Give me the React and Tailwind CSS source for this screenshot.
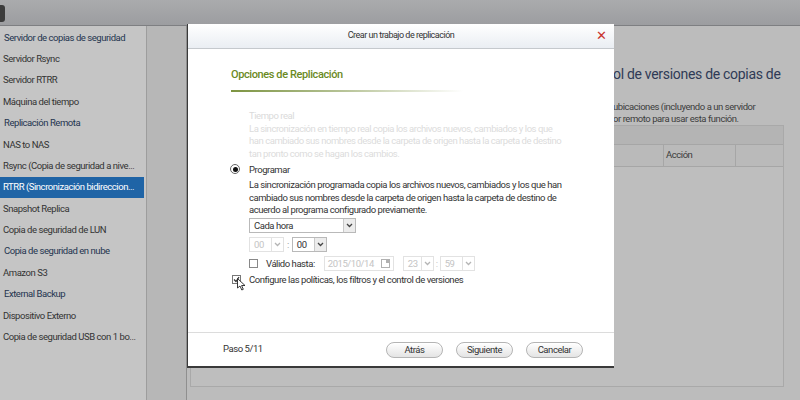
import { useState } from "react";

const menu = [
  { label: "Servidor de copias de seguridad", head: true },
  { label: "Servidor Rsync" },
  { label: "Servidor RTRR" },
  { label: "Máquina del tiempo" },
  { label: "Replicación Remota", head: true },
  { label: "NAS to NAS" },
  { label: "Rsync (Copia de seguridad a nive..." },
  { label: "RTRR (Sincronización bidireccion...", active: true },
  { label: "Snapshot Replica" },
  { label: "Copia de seguridad de LUN" },
  { label: "Copia de seguridad en nube", head: true },
  { label: "Amazon S3" },
  { label: "External Backup", head: true },
  { label: "Dispositivo Externo" },
  { label: "Copia de seguridad USB con 1 bo..." },
];

function Chevron({ faded }) {
  return (
    <svg width="7" height="5" viewBox="0 0 7 5">
      <path d="M1 1 L3.5 3.5 L6 1" fill="none" stroke={faded ? "#b5b5b5" : "#444"} strokeWidth="1.3" />
    </svg>
  );
}

function Select({ value, width, faded }) {
  return (
    <div
      className={`flex h-[15px] items-stretch border ${faded ? "border-[#e2e2e2] text-[#c4c4c4]" : "border-[#b9b9b9] text-[#333]"}`}
      style={{ width }}
    >
      <div className="flex flex-1 items-center pl-[4px]">{value}</div>
      <div className={`flex w-[12px] items-center justify-center border-l ${faded ? "border-[#e2e2e2]" : "border-[#c9c9c9] bg-[#ececec]"}`}>
        <Chevron faded={faded} />
      </div>
    </div>
  );
}

function Button({ children }) {
  return (
    <button className="h-[16px] w-[57px] rounded-full border border-[#b4b4b4] bg-gradient-to-b from-white to-[#e4e4e4] text-[#333] shadow-[0_1px_0_#fff_inset]">
      {children}
    </button>
  );
}

function Modal() {
  const [checked, setChecked] = useState(true);
  return (
    <div className="absolute left-[187px] top-[24px] flex h-[344px] w-[427px] flex-col border-b-2 border-l border-[#3a3a3a] bg-white">
      <div className="relative flex h-[25px] items-center justify-center border-b border-[#c5c9cd] bg-gradient-to-b from-white to-[#eaeef3] text-[9px] tracking-[-0.5px] text-[#333]">
        Crear un trabajo de replicación
        <span className="absolute right-[8px] top-[5px] text-[13px] leading-none text-[#c8332e]">✕</span>
      </div>
      <div className="flex-1 pl-[43px] pr-[20px]">
        <div className="mt-[18px] text-[11px] font-medium tracking-[-0.4px] text-[#6b8a1e]">Opciones de Replicación</div>
        <div className="mt-[6px] h-[2px] w-[232px] bg-gradient-to-r from-[#7d9440] via-[#b9c59a] to-transparent" />
        <div className="whitespace-nowrap pl-[18px] leading-[13px]">
          <div className="mt-[17px] text-[#dadada]">Tiempo real</div>
          <div className="mt-[1px] leading-[12.5px] text-[#dcdcdc]">
            <div>La sincronización en tiempo real copia los archivos nuevos, cambiados y los que</div>
            <div>han cambiado sus nombres desde la carpeta de origen hasta la carpeta de destino</div>
            <div>tan pronto como se hagan los cambios.</div>
          </div>
          <div className="relative mt-[3px] text-[#333]">
            <span className="absolute left-[-19px] top-[1px] flex h-[10px] w-[10px] items-center justify-center rounded-full border border-[#666] bg-white">
              <span className="h-[5px] w-[5px] rounded-full bg-[#111]" />
            </span>
            Programar
          </div>
          <div className="mt-[3px] leading-[12.5px] text-[#333]">
            <div>La sincronización programada copia los archivos nuevos, cambiados y los que han</div>
            <div>cambiado sus nombres desde la carpeta de origen hasta la carpeta de destino de</div>
            <div>acuerdo al programa configurado previamente.</div>
          </div>
          <div className="mt-[1px]">
            <Select value="Cada hora" width={107} />
          </div>
          <div className="mt-[4px] flex items-center">
            <Select value="00" width={35} faded />
            <span className="mx-[3px] text-[#999]">:</span>
            <Select value="00" width={35} />
          </div>
          <div className="mt-[4px] flex items-center">
            <span className="h-[9px] w-[9px] border border-[#888] bg-white" />
            <span className="ml-[8px] text-[#333]">Válido hasta:</span>
            <div className="ml-[9px] flex h-[15px] w-[70px] items-center justify-between border border-[#e2e2e2] px-[3px] text-[#c4c4c4]">
              2015/10/14
              <svg width="9" height="9" viewBox="0 0 9 9">
                <rect x="0.5" y="0.5" width="8" height="8" fill="none" stroke="#b0b0b0" />
                <rect x="5" y="1" width="3" height="3" fill="#b0b0b0" />
              </svg>
            </div>
            <div className="ml-[9px]">
              <Select value="23" width={31} faded />
            </div>
            <span className="mx-[2px] text-[#c4c4c4]">:</span>
            <Select value="59" width={35} faded />
          </div>
          <div className="relative mt-[2px] flex items-center text-[#333]">
            <button
              onClick={() => setChecked(!checked)}
              className="absolute left-[-17px] top-[2px] flex h-[9px] w-[9px] items-center justify-center border border-[#777] bg-white"
            >
              {checked && (
                <svg width="7" height="7" viewBox="0 0 7 7">
                  <path d="M1 3.5 L3 5.5 L6 1" fill="none" stroke="#333" strokeWidth="1.2" />
                </svg>
              )}
            </button>
            <svg className="absolute left-[-12px] top-[5px]" width="9" height="13" viewBox="0 0 9 13">
              <path d="M0.5 0.5 L0.5 10 L3 8 L4.8 12 L6.3 11.3 L4.6 7.5 L8 7.5 Z" fill="#fff" stroke="#222" strokeWidth="0.9" />
            </svg>
            Configure las políticas, los filtros y el control de versiones
          </div>
        </div>
      </div>
      <div className="flex h-[34px] items-center border-t border-[#dcdcdc] pl-[35px] pr-[31px] text-[#333]">
        <span>Paso 5/11</span>
        <div className="ml-auto flex gap-[13px]">
          <Button>Atrás</Button>
          <Button>Siguiente</Button>
          <Button>Cancelar</Button>
        </div>
      </div>
    </div>
  );
}

export default function App() {
  return (
    <div className="relative h-[400px] w-[800px] overflow-hidden bg-[#bdbdbd] font-['Roboto',sans-serif] text-[9.5px] tracking-[-0.45px]">
      <div className="relative h-[26px] border-b border-[#7e7f82] bg-gradient-to-b from-[#aaabad] to-[#9c9da0]">
        <div className="absolute left-[-3px] top-[5px] h-[17px] w-[8px] rounded-[3px] bg-[#3c3c3c]" />
      </div>
      <div className="flex h-[374px]">
        <div className="w-[147px] border-r border-[#9d9d9d] bg-[#c5c5c5] pt-[1px]">
          {menu.map((m) => (
            <div
              key={m.label}
              className={`flex h-[21.4px] items-center whitespace-nowrap ${
                m.active
                  ? "mr-[2px] bg-[#1f64a6] pl-[3px] text-white"
                  : m.head
                  ? "pl-[4px] text-[#24344f]"
                  : "pl-[3px] text-[#333]"
              }`}
            >
              {m.label}
            </div>
          ))}
        </div>
        <div className="w-[40px] border-r border-[#8f8f8f] bg-[#b7b7b7]" />
        <div className="flex flex-1 flex-col bg-[#bcbcbc]">
          <div className="whitespace-nowrap pl-[426px] pt-[38px] text-[14px] tracking-[-0.3px] text-[#2f3a56]">
            ol de versiones de copias de
          </div>
          <div className="pl-[426px] pt-[16px] leading-[12px] text-[#3c3c3c]">
            <div>ubicaciones (incluyendo a un servidor</div>
            <div>or remoto para usar esta función.</div>
          </div>
          <div className="ml-[3px] flex h-[262px] w-[594px] flex-col border border-[#a9a9a9] bg-[#c2c2c2]">
            <div className="h-[19px] border-b border-[#a6a6a6] bg-[#b4b4b4]" />
            <div className="flex h-[22px] border-b border-[#a6a6a6] bg-[#bababa] text-[#3a3a3a]">
              <div className="w-[473px] border-r border-[#a6a6a6]" />
              <div className="flex w-[72px] items-center border-r border-[#a6a6a6] pl-[2px]">Acción</div>
              <div className="flex-1" />
            </div>
            <div className="flex-1 bg-[#bebebe]" />
          </div>
        </div>
      </div>
      <Modal />
    </div>
  );
}
